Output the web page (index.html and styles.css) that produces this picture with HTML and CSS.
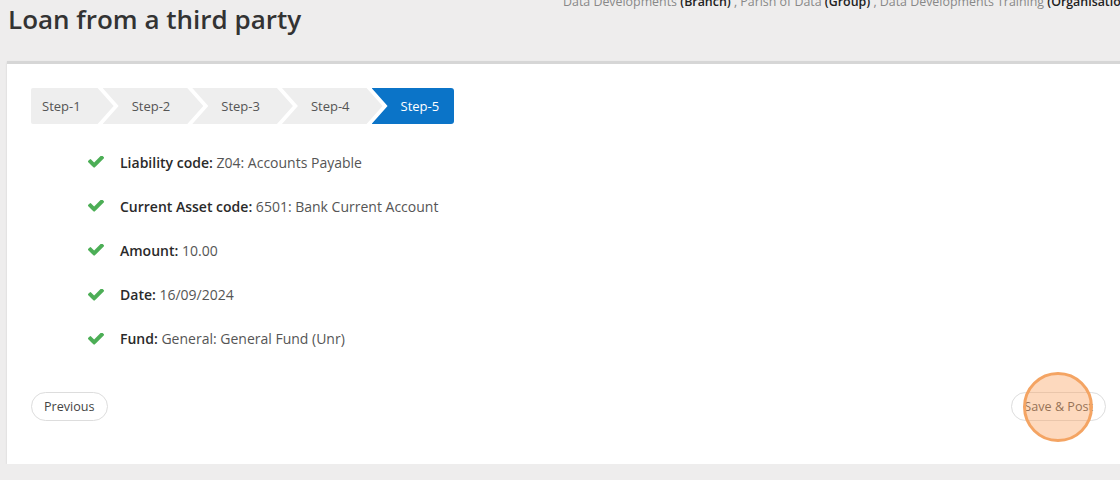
FILE: index.html
```html
<!DOCTYPE html>
<html lang="en">

<head>
    <meta charset="UTF-8">
    <meta name="viewport" content="width=device-width, initial-scale=1.0">
    <title>Loan from a third party</title>
    <link rel="stylesheet" href="styles.css">
</head>

<body>
    <div class="page">
        <div class="page-header">
            <h1 class="page-title">Loan from a third party</h1>
            <div class="org-path">
                Data Developments <b>(Branch)</b> , Parish of Data <b>(Group)</b> , Data Developments Training <b>(Organisation)</b>
            </div>
        </div>

        <div class="card">
            <ul class="steps">
                <li class="step">Step-1</li>
                <li class="step">Step-2</li>
                <li class="step">Step-3</li>
                <li class="step">Step-4</li>
                <li class="step active">Step-5</li>
            </ul>

            <ul class="summary">
                <li>
                    <svg class="check" viewBox="121 430 1550 1092"><path d="M1671 566q0 40-28 68l-724 724-136 136q-28 28-68 28t-68-28l-136-136-362-362q-28-28-28-68t28-68l136-136q28-28 68-28t68 28l294 295 656-657q28-28 68-28t68 28l136 136q28 28 28 68z"/></svg>
                    <span><b>Liability code:</b> Z04: Accounts Payable</span>
                </li>
                <li>
                    <svg class="check" viewBox="121 430 1550 1092"><path d="M1671 566q0 40-28 68l-724 724-136 136q-28 28-68 28t-68-28l-136-136-362-362q-28-28-28-68t28-68l136-136q28-28 68-28t68 28l294 295 656-657q28-28 68-28t68 28l136 136q28 28 28 68z"/></svg>
                    <span><b>Current Asset code:</b> 6501: Bank Current Account</span>
                </li>
                <li>
                    <svg class="check" viewBox="121 430 1550 1092"><path d="M1671 566q0 40-28 68l-724 724-136 136q-28 28-68 28t-68-28l-136-136-362-362q-28-28-28-68t28-68l136-136q28-28 68-28t68 28l294 295 656-657q28-28 68-28t68 28l136 136q28 28 28 68z"/></svg>
                    <span><b>Amount:</b> 10.00</span>
                </li>
                <li>
                    <svg class="check" viewBox="121 430 1550 1092"><path d="M1671 566q0 40-28 68l-724 724-136 136q-28 28-68 28t-68-28l-136-136-362-362q-28-28-28-68t28-68l136-136q28-28 68-28t68 28l294 295 656-657q28-28 68-28t68 28l136 136q28 28 28 68z"/></svg>
                    <span><b>Date:</b> 16/09/2024</span>
                </li>
                <li>
                    <svg class="check" viewBox="121 430 1550 1092"><path d="M1671 566q0 40-28 68l-724 724-136 136q-28 28-68 28t-68-28l-136-136-362-362q-28-28-28-68t28-68l136-136q28-28 68-28t68 28l294 295 656-657q28-28 68-28t68 28l136 136q28 28 28 68z"/></svg>
                    <span><b>Fund:</b> General: General Fund (Unr)</span>
                </li>
            </ul>

            <div class="actions">
                <button class="btn">Previous</button>
                <div class="btn-wrap">
                    <button class="btn">Save &amp; Post</button>
                    <span class="click-mark"></span>
                </div>
            </div>
        </div>
    </div>
</body>

</html>
```

FILE: styles.css
```css
html,
body {
    margin: 0;
    padding: 0;
    background: #eeeded;
    overflow: hidden;
}

body {
    font-family: "Open Sans", "Liberation Sans", sans-serif;
    color: #333;
}

.page {
    width: 1130px;
    padding-left: 7px;
    box-sizing: border-box;
}

.page-header {
    display: grid;
    grid-template-columns: 556px 1fr;
    height: 61px;
}

.page-title {
    margin: 0;
    padding: 2px 0 0 1px;
    font-size: 26px;
    font-weight: 600;
    line-height: 34px;
    color: #333;
}

.org-path {
    margin-top: -7px;
    font-size: 12.4px;
    line-height: 18px;
    color: #888;
    white-space: nowrap;
}

.org-path b {
    font-weight: 600;
    color: #222;
}

.card {
    background: #fff;
    border-top: 3px solid #d6d6d6;
    box-shadow: 0 1px 2px rgba(0, 0, 0, .12);
    padding: 24px 24px 43px;
}

.steps {
    display: flex;
    list-style: none;
    margin: 0;
    padding: 0;
}

.step {
    height: 36px;
    line-height: 36px;
    font-size: 13px;
    color: #555;
    background: #eeeeee;
    padding: 0 33px 0 29px;
    margin-left: -11px;
    clip-path: polygon(0 0, calc(100% - 16px) 0, 100% 50%, calc(100% - 16px) 100%, 0 100%, 16px 50%);
}

.step:first-child {
    margin-left: 0;
    padding-left: 11px;
    clip-path: polygon(0 0, calc(100% - 16px) 0, 100% 50%, calc(100% - 16px) 100%, 0 100%);
    border-radius: 2px 0 0 2px;
}

.step.active {
    background: #0b74c8;
    color: #fff;
    padding-right: 15px;
    clip-path: polygon(0 0, 100% 0, 100% 100%, 0 100%, 16px 50%);
    border-radius: 0 3px 3px 0;
}

.summary {
    list-style: none;
    margin: 16px 0 0;
    padding: 0 0 0 57px;
}

.summary li {
    display: flex;
    align-items: center;
    height: 44.2px;
    font-size: 14px;
    color: #555;
}

.summary b {
    font-weight: 600;
    color: #2a2a2a;
}

.check {
    width: 16px;
    height: 12px;
    margin-right: 16px;
    fill: #4cae56;
}

.actions {
    display: flex;
    justify-content: space-between;
    align-items: center;
    margin-top: 31px;
}

.btn {
    height: 29px;
    padding: 0 12px;
    font-family: inherit;
    font-size: 12.6px;
    color: #444;
    background: #fff;
    border: 1px solid #ddd;
    border-radius: 15px;
    cursor: pointer;
}

.btn-wrap {
    position: relative;
}

.click-mark {
    position: absolute;
    left: 12px;
    top: -20px;
    width: 64px;
    height: 64px;
    border-radius: 50%;
    border: 3px solid #f4a463;
    background: rgba(250, 170, 110, .45);
    pointer-events: none;
}
```
